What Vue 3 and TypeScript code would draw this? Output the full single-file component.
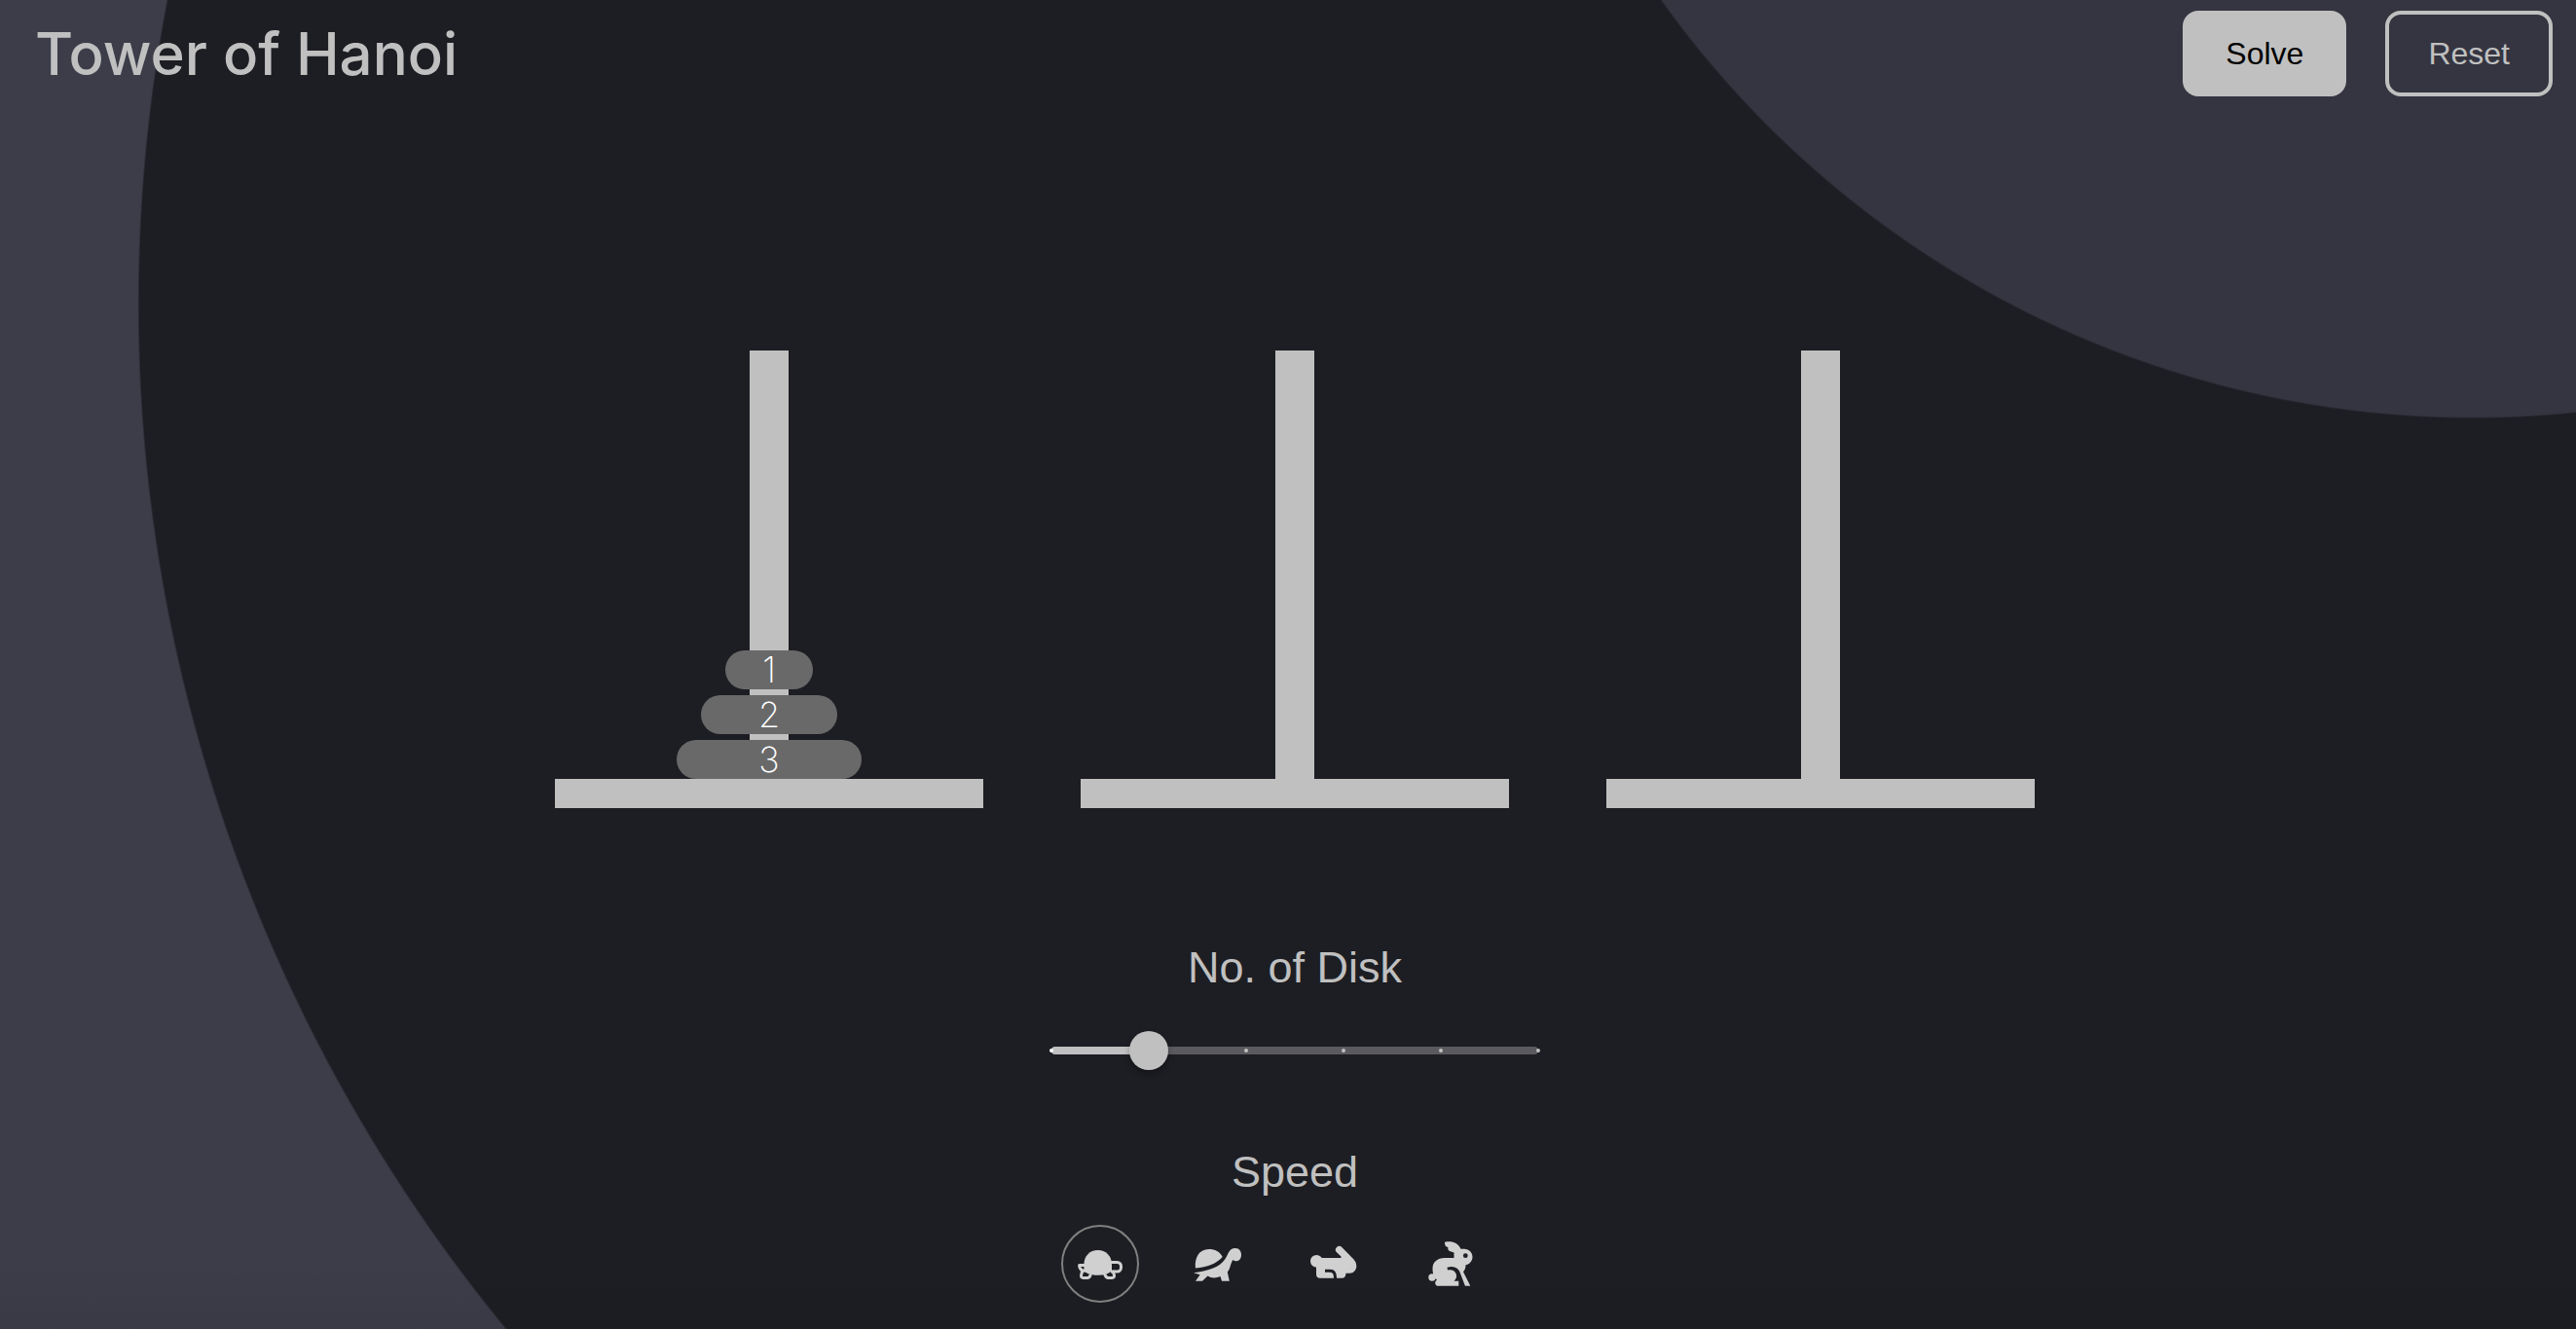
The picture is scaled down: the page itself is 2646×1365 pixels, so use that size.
<script setup lang="ts">
import { computed, ref } from 'vue'

const MIN_DISKS = 2
const MAX_DISKS = 7
const delays: Record<string, number> = { slowest: 1200, slow: 800, fast: 400, fastest: 150 }

const diskCount = ref(3)
const speed = ref('slowest')
const solving = ref(false)
const towers = ref<number[][]>([[1, 2, 3], [], []])
let run = 0

const marks = Array.from({ length: MAX_DISKS - MIN_DISKS + 1 }, (_, i) => MIN_DISKS + i)
const fill = computed(() => `${((diskCount.value - MIN_DISKS) / (MAX_DISKS - MIN_DISKS)) * 100}%`)

function diskWidth(disk: number): string {
  return `${40 + disk * 50}px`
}

function reset(): void {
  run++
  solving.value = false
  towers.value = [Array.from({ length: diskCount.value }, (_, i) => i + 1), [], []]
}

async function move(n: number, from: number, to: number, via: number, id: number): Promise<void> {
  if (n === 0 || id !== run) return
  await move(n - 1, from, via, to, id)
  await new Promise((done) => setTimeout(done, delays[speed.value]))
  if (id !== run) return
  const disk = towers.value[from].shift()
  if (disk !== undefined) towers.value[to].unshift(disk)
  await move(n - 1, via, to, from, id)
}

async function solve(): Promise<void> {
  reset()
  const id = run
  solving.value = true
  await move(diskCount.value, 0, 2, 1, id)
  if (id === run) solving.value = false
}
</script>

<template>
  <div class="page">
    <header class="bar">
      <h1 class="title">Tower of Hanoi</h1>
      <div class="actions">
        <button type="button" class="btn btn-solid" :disabled="solving" @click="solve">Solve</button>
        <button type="button" class="btn btn-outline" @click="reset">Reset</button>
      </div>
    </header>

    <main class="board">
      <section class="towers" aria-label="Towers">
        <div v-for="(tower, i) in towers" :key="i" class="tower">
          <div class="pole">
            <div v-for="disk in tower" :key="disk" class="disk" :style="{ width: diskWidth(disk) }">
              {{ disk }}
            </div>
          </div>
          <div class="base"></div>
        </div>
      </section>

      <section class="control">
        <label class="heading" for="disks">No. of Disk</label>
        <div class="slider">
          <div class="rail"><div class="fill" :style="{ width: fill }"></div></div>
          <div class="marks">
            <span v-for="m in marks" :key="m" class="mark" :class="{ on: m < diskCount }"></span>
          </div>
          <input
            id="disks"
            v-model.number="diskCount"
            class="range"
            type="range"
            :min="MIN_DISKS"
            :max="MAX_DISKS"
            step="1"
            @input="reset"
          />
        </div>
      </section>

      <fieldset class="speed">
        <legend class="heading">Speed</legend>
        <div class="speeds">
          <label class="choice">
            <input v-model="speed" type="radio" name="speed" value="slowest" aria-label="Slowest" />
            <svg viewBox="0 0 48 48" aria-hidden="true">
              <path d="M7.400 25C7.400 16 13.500 10 21.700 10S36 16 36 25v6.500c-3 2.800-8 4.200-14.300 4.200S10 34.300 7.400 31.500z" />
              <g fill="none" stroke="currentColor" stroke-width="3" stroke-linejoin="round">
                <path d="M35 22.500h6.500a4 4 0 0 1 4 4V28a4 4 0 0 1-4 4H35" />
                <path d="M8 25.500H2.600C2.600 29 4.500 31 8.500 31.500" />
                <path d="M6 30.500 4.600 35.500C4.200 37.500 5 38.500 6.600 38.500h4.600c1.800 0 2.700-1.200 3-3.800" />
                <path d="M28.700 34.500c.8 3 2 4 3.800 4h3.700c1.900 0 2.700-1.200 2.200-3L37 31" />
              </g>
            </svg>
          </label>
          <label class="choice">
            <input v-model="speed" type="radio" name="speed" value="slow" aria-label="Slow" />
            <svg viewBox="0 0 48 48" aria-hidden="true">
              <path d="M1.900 28.400C.8 17.500 6 9 15.700 9 22 9 27 11.500 29.700 17 23.500 24 14 27.500 1.900 28.400z" />
              <path d="M0 33.300C14 31.500 27 28 32.500 19 35.500 14.500 36.500 8 42.700 8c3.800 0 6.300 3 6.300 6.800 0 4-2.200 6.500-5 6.500-1.500 0-2.500-.5-3.500-1.300C37.500 24 38 29 34.800 32.500l2 9.200H29L27.500 37C23 39 18 39 14.500 36.500L9 41.700H2l4.600-6.500z" />
            </svg>
          </label>
          <label class="choice">
            <input v-model="speed" type="radio" name="speed" value="fast" aria-label="Fast" />
            <svg viewBox="0 0 48 48" aria-hidden="true">
              <circle cx="6.300" cy="21.300" r="6.300" />
              <path d="M11 18h20.500v-1.500L27 12.300a3.700 3.700 0 0 1 5.300-5.200L44.500 19.500C46.500 21.600 47.300 24 47.300 26.500c0 4-3 7.200-6.800 7.200h-4c0 3-1.600 5-4.300 5H10a4 4 0 0 1-4-4V24z" />
              <path class="cut" d="M15 31.300h5.500q5.100 0 5.100 7.900" />
            </svg>
          </label>
          <label class="choice">
            <input v-model="speed" type="radio" name="speed" value="fastest" aria-label="Fastest" />
            <svg viewBox="0 0 48 48" aria-hidden="true">
              <circle cx="5" cy="38" r="3.700" />
              <path d="M10 46.700C7.500 45 7.800 42 10 40.500 6.500 38 5.500 33 5.500 29 5.500 22 10.500 18 18 18h9.500V12.500L23 11c-1.500-.7-2-2-1.500-3.700C19 6.500 17.800 5 18 1.800c8-1.500 13 .7 16.500 6.900h4A8.200 8.200 0 0 1 46.500 17c0 4-3 7.500-7 8.300 0 3.200-.8 5.200-2.500 7l7.300 14.400z" />
              <path class="gap" d="M20.500 27.800C27 25.500 31.500 28 33.300 32L39 47h-6.700v-5.200H27.500C30 39.500 30.500 37 29.700 34.500 28.500 31 25 29.500 21 30.500z" />
              <circle class="gap" cx="39.300" cy="15.700" r="2.400" />
            </svg>
          </label>
        </div>
      </fieldset>
    </main>
  </div>
</template>

<style>
body {
  margin: 0;
  background: #1d1e23;
}
</style>

<style scoped>
.page {
  --silver: #c0c0c0;
  --dark: #1d1e23;
  box-sizing: border-box;
  min-height: 100vh;
  color: var(--silver);
  font-family: "Liberation Sans", Arial, sans-serif;
  background:
    linear-gradient(to top, rgba(0, 0, 0, 0.06), transparent 64px),
    radial-gradient(circle at 96% -596px, #343540 1024px, transparent 1026px),
    radial-gradient(circle at 68% 312px, var(--dark) 1656px, #3c3d49 1658px);
}

.bar {
  display: flex;
  justify-content: space-between;
  align-items: center;
  height: 110px;
  padding: 0 24px 0 36px;
}

.title {
  margin: 0;
  font-family: Inter, "Liberation Sans", sans-serif;
  font-size: 60px;
  line-height: 72px;
  font-weight: 500;
}

.actions {
  display: flex;
  gap: 40px;
}

.btn {
  height: 88px;
  padding: 0 40px;
  border: 4px solid var(--silver);
  border-radius: 16px;
  font: 400 32px/40px "Liberation Sans", Arial, sans-serif;
  cursor: pointer;
}

.btn-solid {
  background: var(--silver);
  color: #000;
}

.btn-outline {
  background: transparent;
  color: var(--silver);
}

.board {
  display: flex;
  flex-direction: column;
  align-items: center;
  padding: 250px 0 26px 14px;
}

.towers {
  display: flex;
  gap: 100px;
}

.tower {
  display: flex;
  flex-direction: column;
  align-items: center;
  width: 440px;
}

.pole {
  display: flex;
  flex-direction: column;
  justify-content: flex-end;
  align-items: center;
  gap: 6px;
  width: 40px;
  height: 440px;
  background: var(--silver);
}

.base {
  width: 100%;
  height: 30px;
  background: var(--silver);
}

.disk {
  flex: none;
  height: 40px;
  border-radius: 20px;
  background: #696969;
  color: #fff;
  font-family: Inter, "Liberation Sans", sans-serif;
  font-size: 36px;
  line-height: 40px;
  font-weight: 200;
  text-align: center;
}

.control {
  display: flex;
  flex-direction: column;
  align-items: center;
  gap: 37px;
  margin-top: 136px;
}

.heading {
  padding: 0;
  font-size: 45px;
  line-height: 56px;
  font-weight: 400;
  text-align: center;
}

.slider {
  display: grid;
  align-items: center;
  width: 540px;
  height: 40px;
}

.slider > * {
  grid-area: 1 / 1;
}

.rail {
  height: 8px;
  margin: 0 20px;
  border-radius: 4px;
  background: #5b5b5f;
  overflow: hidden;
}

.fill {
  height: 100%;
  background: var(--silver);
}

.marks {
  display: flex;
  justify-content: space-between;
  margin: 0 18px;
}

.mark {
  width: 4px;
  height: 4px;
  border-radius: 50%;
  background: var(--silver);
}

.mark.on {
  background: #fff;
}

.range {
  appearance: none;
  width: 100%;
  height: 40px;
  margin: 0;
  background: transparent;
  cursor: pointer;
}

.range::-webkit-slider-thumb {
  appearance: none;
  width: 40px;
  height: 40px;
  border-radius: 50%;
  background: var(--silver);
  box-shadow: 0 4px 6px rgba(0, 0, 0, 0.3);
}

.speed {
  min-width: 0;
  margin: 77px 0 0;
  padding: 0;
  border: 0;
}

.speed .heading {
  width: 100%;
}

.speeds {
  display: flex;
  margin-top: 26px;
}

.choice {
  display: grid;
  place-items: center;
  width: 80px;
  height: 80px;
  margin-right: 40px;
  cursor: pointer;
}

.choice > * {
  grid-area: 1 / 1;
}

.choice input {
  appearance: none;
  box-sizing: border-box;
  width: 80px;
  height: 80px;
  margin: 0;
  border: 2px solid transparent;
  border-radius: 50%;
  cursor: pointer;
}

.choice input:checked {
  border-color: #808080;
}

.choice svg {
  width: 48px;
  height: 48px;
  color: #d0d0d0;
  fill: currentColor;
  overflow: visible;
  pointer-events: none;
}

.choice .cut {
  fill: none;
  stroke: var(--dark);
  stroke-width: 3;
}

.choice .gap {
  fill: var(--dark);
}
</style>
